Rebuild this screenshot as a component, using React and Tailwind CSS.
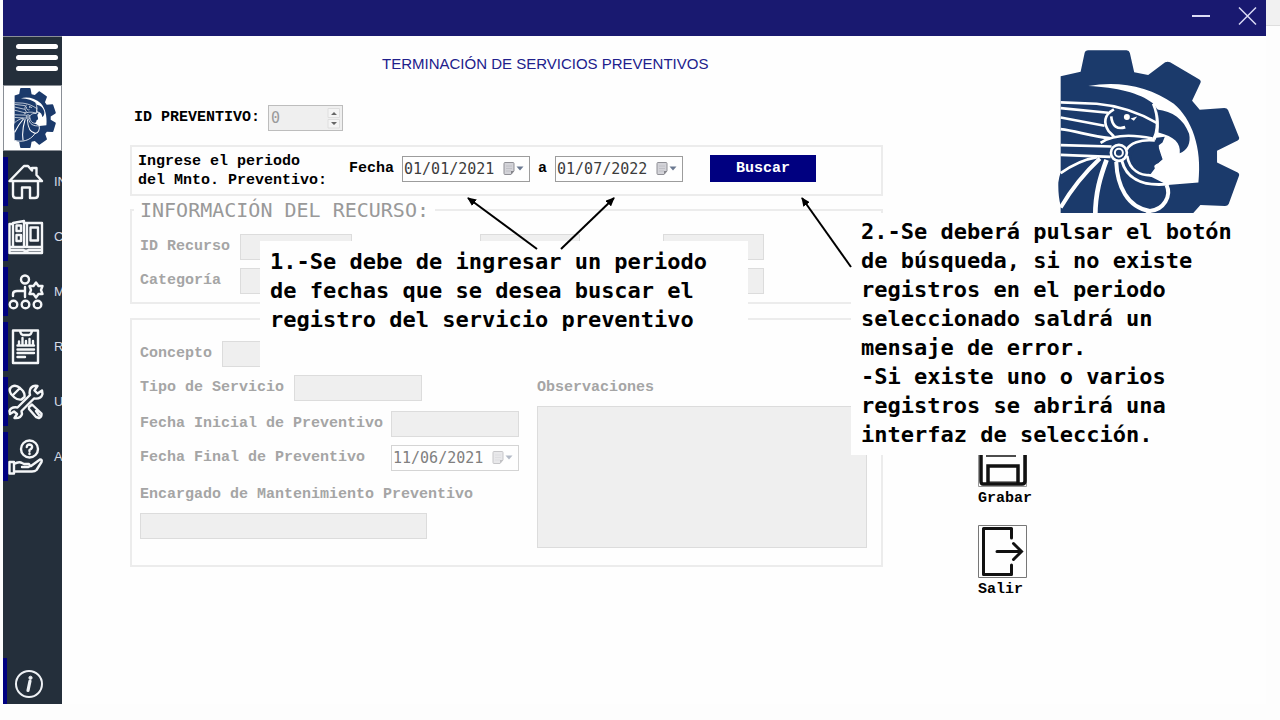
import React from "react";

const MONO = "font-['DejaVu_Sans_Mono','Liberation_Mono',monospace]";
const LABEL = "text-[15px] leading-5 font-bold font-['Liberation_Mono',monospace]";
const FIELD = "h-[26px] border border-[#dcdcdc] bg-[#efefef]";

function GearLogo({ className }) {
  return (
    <svg viewBox="54 33 547 638" preserveAspectRatio="none" className={className} aria-hidden="true">
      <path
        fill="#1b3a6b"
        d="M62 112 L122 98 L134 42 Q136 34 145 34 H260 Q268 34 270 42 L283 100 L325 108 L376 70 Q384 66 391 70 L479 121 Q485 125 482 132 L457 185 L480 212 L554 207 Q562 207 565 213 L598 294 Q600 301 594 304 L532 335 V370 L594 400 Q600 403 598 410 L567 494 Q564 500 556 500 L482 497 L460 522 L482 572 Q485 579 479 583 L391 634 Q384 638 376 634 L325 596 L283 604 L270 662 Q268 670 260 670 H145 Q136 670 134 662 L122 606 L62 592 V500 Q54 470 55 430 Q58 410 62 400 Z"
      />
      <path
        fill="#fff"
        d="M145 141 C235 124 330 142 402 194 C456 240 488 325 476 430 L383 437 L322 407 L345 378 L368 360 L355 320 L345 300 L354 212 L338 192 C300 162 230 145 145 141 Z"
      />
      <path fill="#1b3a6b" d="M352 211 C398 216 432 240 448 284 C454 312 443 334 420 342 C423 312 404 292 356 280 Q360 250 352 211 Z" />
      <path fill="#1b3a6b" d="M275 352 C280 322 308 306 340 318 L350 296 L375 293 L368 310 L357 318 L356 335 L368 360 L355 372 L342 376 L345 388 L332 405 C300 402 275 386 275 352 Z" />
      <g fill="none" stroke="#fff" strokeWidth="8" strokeLinejoin="round" strokeLinecap="butt">
        <path d="M62 190 L170 194 C240 200 300 222 352 252" />
        <path d="M62 207 L205 221" />
        <path d="M62 235 L194 260" />
        <path d="M62 270 C110 275 150 292 210 297" />
        <path d="M222 211 C192 228 190 250 206 276 L222 292" />
        <path d="M214 232 C216 262 234 272 256 264" />
        <path d="M340 194 C356 230 356 280 338 304" />
        <path d="M182 311 C220 286 270 284 338 298" />
        <path d="M62 318 L215 322" />
        <path d="M62 347 L212 353" />
        <circle cx="237" cy="341" r="24" />
        <circle cx="237" cy="341" r="12" strokeWidth="6" />
        <path d="M260 332 C270 312 300 300 345 304" />
        <path d="M262 350 C268 392 300 412 342 408" />
        <path d="M246 365 C258 412 300 444 388 434" strokeWidth="9" />
        <path d="M229 368 C232 440 262 505 330 515 C372 512 396 470 380 437" strokeWidth="12" />
        <path d="M200 362 C182 410 166 460 166 530 L172 590" strokeWidth="14" />
        <path d="M180 358 C140 395 100 440 62 505" strokeWidth="12" />
        <path d="M172 354 C125 362 90 382 62 402" />
        <path d="M62 590 C150 610 260 600 330 515" strokeWidth="10" />
      </g>
      <circle cx="261" cy="234" r="9" fill="#fff" />
      <path fill="#fff" d="M272 238 L292 232 L282 245 Z" />
    </svg>
  );
}

const iconProps = {
  viewBox: "0 0 36 36",
  className: "h-9 w-9 shrink-0",
  fill: "none",
  stroke: "#f4f6f8",
  strokeWidth: 2.4,
  strokeLinejoin: "round",
  strokeLinecap: "round",
  "aria-hidden": true,
};

const HomeIcon = () => (
  <svg {...iconProps}>
    <path d="M1.500 17 L16 2 H20 L24 6.500 V4 H28.500 V11 L34 17 H30 V31 Q30 34 27 34 H22 V23.500 H14 V34 H8 Q5 34 5 31 V17 Z M6 17 H30" />
  </svg>
);
const BookIcon = () => (
  <svg {...iconProps}>
    <path d="M5 4 L16 2 V28 H5 Z M16 4 H19 V28 M19 4 H34 V28 H19 M5 5 H1.500 V34 H34 V28 M1.500 28 H34 M1.500 31 H15 L18 32 L21 31 H34 M8.500 6.500 H13 V12 H8.500 Z M8.500 16 H13 V22 H8.500 Z M22.500 8.500 H30 V21.500 H22.500 Z" />
  </svg>
);
const MaintenanceIcon = () => (
  <svg {...iconProps}>
    <circle cx="17" cy="5.500" r="4" />
    <circle cx="5.500" cy="30.500" r="3.800" />
    <circle cx="17.500" cy="30.500" r="3.800" />
    <circle cx="29.500" cy="30.500" r="3.800" />
    <path d="M5 22 V20 Q5 17 9 17 H17 V23 M17 13 V17" />
    <path d="M28 8.500 L30.500 12 L34.500 12 L33 16 L34.500 20 L30.500 20 L28 23.500 L25.500 20 L21.500 20 L23 16 L21.500 12 L25.500 12 Z" />
  </svg>
);
const ReportIcon = () => (
  <svg {...iconProps}>
    <path d="M5 1.500 H30 V34 H5 Z M12 2 Q13 6 15 6 H21 Q23 6 24 2 M9.500 16.500 H26 M11 16 V12.500 M14.500 16 V9 M18 16 V12 M21.500 16 V10 M25 16 V12 M9.500 20.500 H26 M9.500 24 H26 M9.500 28 H17" />
  </svg>
);
const ToolsIcon = () => (
  <svg {...iconProps}>
    <path d="M3 10 Q0 5 4 2.500 Q8 .500 12 4 L15 7 Q17 10 16.500 13 L13.500 15.500 Q9 16 6.500 13.500 Z M5 11 L12 4" />
    <path d="M21 23 L24 20.500 L33.500 29.500 Q34 33 31 34 L28 33 L21 25 Z M28 27 L31 31" />
    <path d="M34 6.500 L29.500 9.500 L26.500 6.500 L29.500 2 Q25 1 22.500 4.500 Q21 8 22 11 L9.500 23.500 Q3 22.500 1.500 27 L2 30 L6 27.500 L9 30 L6.500 34 Q13 34.500 14 30 L13.500 27 L26 14.500 Q33 15.500 34.500 10 Z" />
  </svg>
);
const HelpIcon = () => (
  <svg {...iconProps}>
    <circle cx="21.500" cy="10" r="8.500" />
    <path d="M18.800 8 Q19 5.500 21.500 5.500 Q24.500 6 24 8.500 Q23.500 10 21.500 11 V12 M21.500 14.500 V15" />
    <path d="M1.500 23 H6 V34.500 H1.500 Z M6 25 Q11 22 14 24 L16 25 H21 Q23 27 20.500 28 H14 M23 27 L32 20.500 Q34.500 20.500 33.500 23 L28.500 31 Q27 32.500 24 32.500 H6" />
  </svg>
);

const NAV = [
  ["IN", HomeIcon],
  ["C", BookIcon],
  ["M", MaintenanceIcon],
  ["R", ReportIcon],
  ["U", ToolsIcon],
  ["A", HelpIcon],
];

function DateField({ id, value, disabled }) {
  return (
    <div
      className={
        "flex h-[26px] w-32 items-center border " +
        (disabled ? "border-[#d4d4d4] text-[#808080]" : "border-[#9c9c9c] text-[#3c3c3c]")
      }
    >
      <input
        id={id}
        defaultValue={value}
        disabled={disabled}
        className="w-full min-w-0 flex-1 bg-transparent pl-px font-['DejaVu_Sans_Mono','Liberation_Mono',monospace] text-[15px] leading-5 outline-none"
      />
      <button
        type="button"
        disabled={disabled}
        aria-label="Abrir calendario"
        className={"mr-1 shrink-0 " + (disabled ? "opacity-50" : "")}
      >
        <svg width="22" height="14" viewBox="0 0 22 14" aria-hidden="true">
          <path d="M1 1.500 Q1 .500 2 .500 H10 Q11 .500 11 1.500 V9 L8 12.500 H2 Q1 12.500 1 11.500 Z" fill="#d3d3d8" stroke="#909096" />
          <path d="M3 4 H9 M3 6.500 H9 M3 9 H8" stroke="#c0c0c6" />
          <path d="M11 9 L8 12.500 V9 Z" fill="#85858b" />
          <path d="M13.500 4.500 H20.500 L17 8.500 Z" fill="#6a7890" />
        </svg>
      </button>
    </div>
  );
}

export default function App() {
  return (
    <div className="relative flex min-h-screen bg-[#fdfdfd] pb-4 pl-[3px]">
      <div className="flex min-w-0 flex-1 flex-col bg-[#fefefe]">
        <header className="flex h-9 items-center justify-end gap-6 bg-[#191970] pr-2 pb-1">
          <button type="button" aria-label="Minimizar">
            <svg width="22" height="22" viewBox="0 0 22 22" stroke="#dcdcf5" strokeWidth="2" aria-hidden="true">
              <path d="M2 11 H20" />
            </svg>
          </button>
          <button type="button" aria-label="Cerrar">
            <svg width="22" height="22" viewBox="0 0 22 22" stroke="#dcdcf5" strokeWidth="1.500" aria-hidden="true">
              <path d="M3 2.500 L20 19.500 M20 2.500 L3 19.500" />
            </svg>
          </button>
        </header>

        <div className="flex flex-1">
          <nav className="flex w-[59px] shrink-0 flex-col overflow-hidden border-t border-[#8a8f96] bg-[#242f3b]">
            <button type="button" aria-label="Menú" className="flex h-12 shrink-0 flex-col items-end gap-1.5 pt-[7px] pr-1">
              <span className="h-[5px] w-[42px] rounded-full bg-white" />
              <span className="h-[5px] w-[42px] rounded-full bg-white" />
              <span className="h-[5px] w-[42px] rounded-full bg-white" />
            </button>
            <div className="flex h-[66px] shrink-0 items-center border border-[#8a8f96] bg-white pl-[10px]">
              <GearLogo className="h-[60px] w-[42px]" />
            </div>
            <ul className="mt-1.5 flex flex-col gap-1.5">
              {NAV.map(([text, Icon]) => (
                <li key={text}>
                  <a href="#" className="flex h-[49px] items-center border-l-[5px] border-[#000080]">
                    <Icon />
                    <span className="ml-2.5 font-['Liberation_Sans',sans-serif] text-[13px] text-[#d5dbe6]">{text}</span>
                  </a>
                </li>
              ))}
            </ul>
            <a href="#" aria-label="Información" className="mt-auto flex h-[46px] items-center border-l-4 border-[#000080] pt-1.5 pl-[7px]">
              <svg width="30" height="30" viewBox="0 0 30 30" fill="none" stroke="#eef1f5" aria-hidden="true">
                <circle cx="15" cy="15" r="13" strokeWidth="2" />
                <circle cx="16.500" cy="8.800" r="1.600" fill="#eef1f5" strokeWidth="1" />
                <path d="M16 12 L14 21.500" strokeWidth="3.200" strokeLinecap="round" />
              </svg>
            </a>
          </nav>

          <main className="flex min-w-0 flex-1">
            <form className="min-w-0 flex-1 pt-[18px] pl-[68px]" onSubmit={(e) => e.preventDefault()}>
              <h1 className="ml-[252px] font-['Liberation_Sans',sans-serif] text-[15px] leading-5 text-[#20208c]">
                TERMINACIÓN DE SERVICIOS PREVENTIVOS
              </h1>

              <div className="mt-[31px] flex items-center gap-2 pl-1">
                <label htmlFor="id-preventivo" className={LABEL + " text-black"}>ID PREVENTIVO:</label>
                <div className="flex h-[26px] w-[75px] items-center border border-[#bdbdbd] bg-[#efefef]">
                  <input
                    id="id-preventivo"
                    disabled
                    defaultValue="0"
                    className="w-full min-w-0 flex-1 bg-transparent pl-0.5 font-['DejaVu_Sans_Mono','Liberation_Mono',monospace] text-[15px] leading-5 text-[#9a9a9a]"
                  />
                  <svg width="16" height="24" viewBox="0 0 16 24" aria-hidden="true">
                    <path d="M2 2.500 H13.500 V11.500 H2 Z M2 13.500 H13.500 V22 H2 Z" fill="#f4f4f4" stroke="#dedede" />
                    <path d="M5 9 L8 6 L11 9 Z M5 16 L8 19 L11 16 Z" fill="#666" />
                  </svg>
                </div>
              </div>

              <div className="mt-3.5 flex h-[51px] items-center border-2 border-[#ececec] pb-1 pl-1.5">
                <p className="w-[211px] shrink-0 pt-1 font-['Liberation_Mono',monospace] text-[15px] leading-[19px] font-bold text-black">
                  Ingrese el periodo
                  <br />
                  del Mnto. Preventivo:
                </p>
                <label htmlFor="desde" className={LABEL + " mr-2 text-black"}>Fecha</label>
                <DateField id="desde" value="01/01/2021" />
                <label htmlFor="hasta" className={LABEL + " mx-2 text-black"}>a</label>
                <DateField id="hasta" value="01/07/2022" />
                <button type="submit" className={LABEL + " ml-[27px] h-[27px] w-[106px] bg-[#000080] text-white"}>
                  Buscar
                </button>
              </div>

              <fieldset disabled className="mt-1 h-[104px] border-2 border-[#ececec] px-2">
                <legend className={MONO + " -ml-1.5 px-1.5 text-[20px] leading-5 text-[#999999]"}>
                  INFORMACIÓN DEL RECURSO:
                </legend>
                <div className="mt-3.5 flex items-center">
                  <label htmlFor="id-recurso" className={LABEL + " w-[100px] text-[#a5a5a5]"}>ID Recurso</label>
                  <input id="id-recurso" className={FIELD + " w-28"} />
                  <input aria-label="Dato del recurso" className={FIELD + " ml-32 w-[100px]"} />
                  <input aria-label="Detalle del recurso" className={FIELD + " ml-[83px] w-[101px]"} />
                </div>
                <div className="mt-2 flex items-center">
                  <label htmlFor="categoria" className={LABEL + " w-[100px] text-[#a5a5a5]"}>Categoría</label>
                  <input id="categoria" className={FIELD + " w-28"} />
                  <input aria-label="Descripción" className={FIELD + " ml-32 w-[284px]"} />
                </div>
              </fieldset>

              <fieldset disabled className="mt-3.5 grid grid-cols-[397px_1fr] border-2 border-[#ececec] pt-[21px] pr-3.5 pb-[17px] pl-2 text-[#a5a5a5]">
                <div className="flex flex-col items-start">
                  <div className="flex items-center gap-2.5">
                    <label htmlFor="concepto" className={LABEL}>Concepto</label>
                    <input id="concepto" className={FIELD + " w-48"} />
                  </div>
                  <div className="mt-2 flex items-center gap-2.5">
                    <label htmlFor="tipo" className={LABEL}>Tipo de Servicio</label>
                    <input id="tipo" className={FIELD + " w-32"} />
                  </div>
                  <div className="mt-2.5 flex items-center">
                    <label htmlFor="inicial" className={LABEL + " w-[251px]"}>Fecha Inicial de Preventivo</label>
                    <input id="inicial" className={FIELD + " w-32"} />
                  </div>
                  <div className="mt-2 flex items-center">
                    <label htmlFor="final" className={LABEL + " w-[251px]"}>Fecha Final de Preventivo</label>
                    <DateField id="final" value="11/06/2021" disabled />
                  </div>
                  <label htmlFor="encargado" className={LABEL + " mt-3.5 mb-2"}>Encargado de Mantenimiento Preventivo</label>
                  <input id="encargado" className={FIELD + " w-[287px]"} />
                </div>
                <div className="flex flex-col pt-[37px]">
                  <label htmlFor="observaciones" className={LABEL + " mb-2"}>Observaciones</label>
                  <textarea id="observaciones" className="h-[142px] w-full resize-none border border-[#dcdcdc] bg-[#efefef]" />
                </div>
              </fieldset>
            </form>

            <aside className="flex w-[383px] shrink-0 flex-col pt-[14px]">
              <GearLogo className="mr-[26px] h-[213px] w-[182px] self-end" />
              <div className="mt-[171px] flex flex-col items-start gap-4 pl-[95px] text-black">
                <button type="button" className={LABEL + " flex flex-col items-start gap-0.5"}>
                  <svg width="49" height="53" viewBox="0 0 49 53" fill="none" stroke="#111" aria-hidden="true">
                    <path d="M.5 .5 H48.500 V52.500 H.5 Z" stroke="#999" />
                    <path d="M3 3 H40 L47 10 V47 Q47 50 44 50 H5 Q3 50 3 47 Z M10 50 V32 H40 V50" strokeWidth="3.500" />
                    <path d="M8 22 H38" strokeWidth="1.500" />
                    <path d="M10 48 H40" strokeWidth="1" />
                  </svg>
                  Grabar
                </button>
                <button type="button" className={LABEL + " flex flex-col items-start gap-0.5"}>
                  <svg width="49" height="53" viewBox="0 0 49 53" fill="none" stroke="#111" aria-hidden="true">
                    <path d="M.5 .5 H48.500 V52.500 H.5 Z" stroke="#777" />
                    <path d="M33.500 13 V3.500 H5.500 V49.500 H33.500 V40" strokeWidth="3" strokeLinecap="round" strokeLinejoin="round" />
                    <path d="M19 26.500 H43 M35.500 18.500 L43.500 26.500 L35.500 34.500" strokeWidth="3" strokeLinecap="round" />
                  </svg>
                  Salir
                </button>
              </div>
            </aside>
          </main>
        </div>
      </div>
      <div className="-mb-4 w-3.5 shrink-0">
        <div className="h-[26px] border-b border-[#dedede] bg-[#f1f1f1]" />
      </div>

      {/* Instruction callouts laid over the window */}
      <p className={MONO + " absolute top-[241px] left-[260px] h-32 w-[488px] bg-[#fefefe] pt-[6px] pl-2.5 text-[22px] leading-[29px] font-bold text-black"}>
        1.-Se debe de ingresar un periodo
        <br />
        de fechas que se desea buscar el
        <br />
        registro del servicio preventivo
      </p>
      <p className={MONO + " absolute top-[213px] left-[851px] h-[242px] w-[395px] bg-[#fefefe] pt-1 pl-2.5 text-[22px] leading-[29px] font-bold text-black"}>
        2.-Se deberá pulsar el botón
        <br />
        de búsqueda, si no existe
        <br />
        registros en el periodo
        <br />
        seleccionado saldrá un
        <br />
        mensaje de error.
        <br />
        -Si existe uno o varios
        <br />
        registros se abrirá una
        <br />
        interfaz de selección.
      </p>
      <svg className="pointer-events-none absolute top-[190px] left-[460px]" width="400" height="80" viewBox="460 190 400 80" aria-hidden="true">
        <defs>
          <marker id="tip" markerWidth="9" markerHeight="8" refX="8" refY="4" orient="auto" markerUnits="userSpaceOnUse">
            <path d="M0 0 L9 4 L0 8 Z" fill="#000" />
          </marker>
        </defs>
        <g stroke="#000" strokeWidth="2">
          <path d="M537 249 L468 198" markerEnd="url(#tip)" />
          <path d="M561 249 L614 198" markerEnd="url(#tip)" />
          <path d="M851 267 L802 198" markerEnd="url(#tip)" />
        </g>
      </svg>
    </div>
  );
}
